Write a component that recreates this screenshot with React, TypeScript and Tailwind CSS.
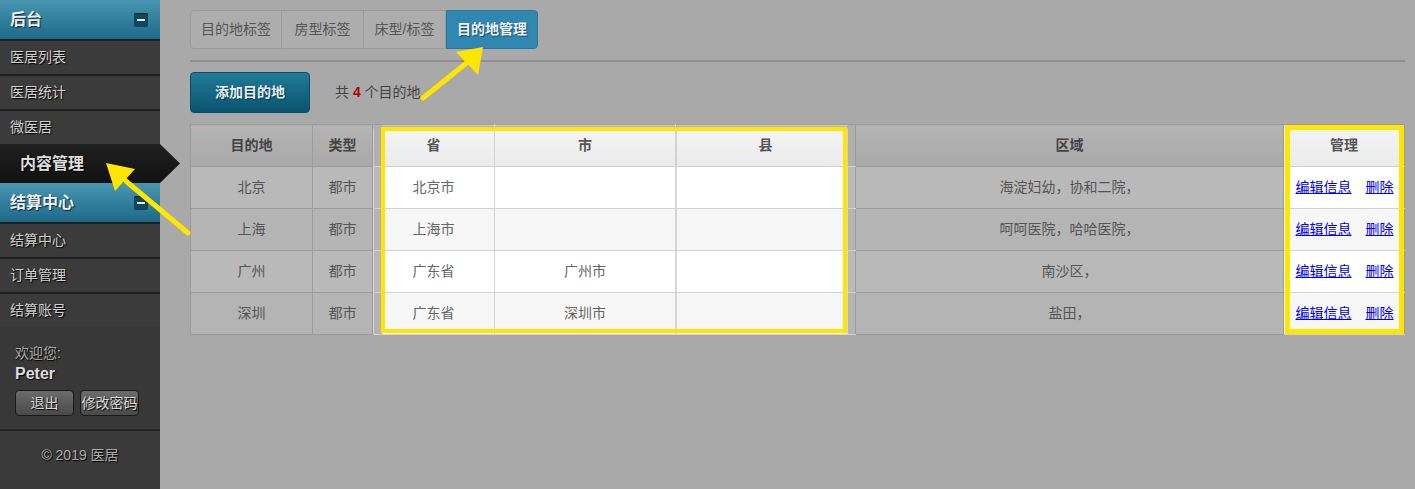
import React from "react";

// 后台 — 目的地管理页（带标注截图）

const FONT = '"Liberation Sans", "Noto Sans CJK SC", sans-serif';

type Row = {
  name: string;
  kind: string;
  province: string;
  city: string;
  county: string;
  area: string;
};

const ROWS: Row[] = [
  { name: "北京", kind: "都市", province: "北京市", city: "", county: "", area: "海淀妇幼，协和二院，" },
  { name: "上海", kind: "都市", province: "上海市", city: "", county: "", area: "呵呵医院，哈哈医院，" },
  { name: "广州", kind: "都市", province: "广东省", city: "广州市", county: "", area: "南沙区，" },
  { name: "深圳", kind: "都市", province: "广东省", city: "深圳市", county: "", area: "盐田，" },
];

function MinusBox() {
  return (
    <span className="flex h-[14px] w-[14px] items-center justify-center rounded-[2px] bg-[#0e4660] shadow-[inset_0_1px_1px_rgba(0,0,0,0.5)]">
      <span className="h-[2px] w-[8px] bg-[#e8e8e8]" />
    </span>
  );
}

function GroupHeader({ title }: { title: string }) {
  return (
    <div className="flex h-[39px] items-center justify-between bg-[linear-gradient(#4896b1,#1c6a87)] pl-[10px] pr-[12px]">
      <span className="text-[16px] font-bold text-[#eeeeee] [text-shadow:1px_1px_1px_#0a2a38]">{title}</span>
      <MinusBox />
    </div>
  );
}

function NavItem({ label }: { label: string }) {
  return (
    <div className="flex h-[35px] items-center border-t-2 border-[#1f1f1f] bg-[#3b3b3b] pl-[10px] text-[14px] text-[#cfcfcf] [text-shadow:1px_1px_1px_#000]">
      {label}
    </div>
  );
}

function Sidebar() {
  return (
    <aside className="relative z-10 flex w-[160px] shrink-0 flex-col bg-[#3a3a3a]">
      <GroupHeader title="后台" />
      <NavItem label="医居列表" />
      <NavItem label="医居统计" />
      <NavItem label="微医居" />
      <div className="flex h-[39px] w-[180px] shrink-0 items-center bg-[linear-gradient(#1f1f1f,#121212)] pl-[20px] text-[16px] font-bold text-[#dddddd] [clip-path:polygon(0_0,160px_0,180px_50%,160px_100%,0_100%)] [text-shadow:1px_1px_1px_#000]">
        内容管理
      </div>
      <GroupHeader title="结算中心" />
      <NavItem label="结算中心" />
      <NavItem label="订单管理" />
      <NavItem label="结算账号" />
      <div className="flex h-[104px] shrink-0 flex-col border-b-2 border-[#222] bg-[#383838] px-[15px] pt-[17px]">
        <span className="text-[14px] leading-[18px] text-[#aaaaaa] [text-shadow:1px_1px_1px_#000]">欢迎您:</span>
        <span className="mt-[2px] text-[16px] font-bold leading-[20px] text-[#dddddd] [text-shadow:1px_1px_1px_#000]">Peter</span>
        <div className="mt-[6px] flex gap-[6px]">
          <button className="h-[26px] w-[59px] rounded-[4px] border border-[#1a1a1a] bg-[linear-gradient(#6c6c6c,#4a4a4a)] text-[14px] text-[#d8d8d8] [text-shadow:1px_1px_1px_#000]">
            退出
          </button>
          <button className="h-[26px] w-[59px] rounded-[4px] border border-[#1a1a1a] bg-[linear-gradient(#6c6c6c,#4a4a4a)] text-[14px] text-[#d8d8d8] [text-shadow:1px_1px_1px_#000]">
            修改密码
          </button>
        </div>
      </div>
      <div className="flex flex-1 justify-center bg-[#3a3a3a] pt-[14px] text-[14px] text-[#aaaaaa] [text-shadow:1px_1px_1px_#000]">
        © 2019 医居
      </div>
    </aside>
  );
}

const TABS = [
  { label: "目的地标签", w: "w-[92px] rounded-l-[4px]" },
  { label: "房型标签", w: "w-[82px] border-l-0" },
  { label: "床型/标签", w: "w-[82px] border-l-0" },
];

function Tabs() {
  return (
    <div className="flex h-[39px]">
      {TABS.map((t) => (
        <div
          key={t.label}
          className={"flex items-center justify-center border border-[#9c9c9c] bg-[#adadad] text-[14px] text-[#555] " + t.w}
        >
          {t.label}
        </div>
      ))}
      <div className="flex w-[92px] items-center justify-center rounded-r-[4px] border border-[#2a78a0] bg-[#2f87b2] text-[14px] font-bold text-[#eef4f8] [text-shadow:1px_1px_1px_#1b4d66]">
        目的地管理
      </div>
    </div>
  );
}

const dimTh =
  "border border-[#9c9c9c] bg-[linear-gradient(#b4b4b4,#a9a9a9)] text-[14px] font-bold text-[#444]";

function Table() {
  return (
    <div className="relative mt-[11px] w-[1214px]">
      <table className="w-[1214px] table-fixed border-collapse text-center">
        <colgroup>
          <col className="w-[122px]" />
          <col className="w-[60px]" />
          <col className="w-[122px]" />
          <col className="w-[181px]" />
          <col className="w-[180px]" />
          <col className="w-[428px]" />
          <col className="w-[121px]" />
        </colgroup>
        <thead>
          <tr className="h-[42px]">
            <th className={dimTh}>目的地</th>
            <th className={dimTh}>类型</th>
            <th className="border border-[#d3d3d3] border-l-[#9c9c9c] border-t-[#9c9c9c] bg-[linear-gradient(to_right,#b0b0b0_9px,transparent_9px),linear-gradient(#b3b3b3_3px,#f4f4f4_3px,#ebebeb)] text-[14px] font-bold text-[#555]">
              省
            </th>
            <th className="border border-[#d3d3d3] border-t-[#9c9c9c] bg-[linear-gradient(#b3b3b3_3px,#f4f4f4_3px,#ebebeb)] text-[14px] font-bold text-[#555]">
              市
            </th>
            <th className="border border-[#d3d3d3] border-r-[#9c9c9c] border-t-[#9c9c9c] bg-[linear-gradient(to_left,#b0b0b0_8px,transparent_8px),linear-gradient(#b3b3b3_3px,#f4f4f4_3px,#ebebeb)] text-[14px] font-bold text-[#555]">
              县
            </th>
            <th className={dimTh}>区域</th>
            <th className="border border-[#d3d3d3] border-r-[#9c9c9c] border-t-[#9c9c9c] bg-[linear-gradient(#f4f4f4,#ebebeb)] text-[14px] font-bold text-[#555]">
              管理
            </th>
          </tr>
        </thead>
        <tbody>
          {ROWS.map((r, i) => {
            const odd = i % 2 === 1;
            const dim = odd ? "bg-[#b4b4b4]" : "bg-[#b9b9b9]";
            const bright = odd ? "bg-[#f7f7f7]" : "bg-white";
            const dimTd = "border border-[#9c9c9c] text-[14px] text-[#555] " + dim;
            const brightTd = "border border-[#d3d3d3] text-[14px] text-[#666] " + bright;
            return (
              <tr key={r.name} className="h-[42px]">
                <td className={dimTd}>{r.name}</td>
                <td className={dimTd}>{r.kind}</td>
                <td
                  className={
                    "border border-[#d3d3d3] border-l-[#9c9c9c] text-[14px] text-[#666] " +
                    (odd
                      ? "bg-[linear-gradient(to_right,#b4b4b4_9px,#f7f7f7_9px)]"
                      : "bg-[linear-gradient(to_right,#b9b9b9_9px,#ffffff_9px)]")
                  }
                >
                  {r.province}
                </td>
                <td className={brightTd}>{r.city}</td>
                <td
                  className={
                    "border border-[#d3d3d3] border-r-[#9c9c9c] text-[14px] text-[#666] " +
                    (odd
                      ? "bg-[linear-gradient(to_left,#b4b4b4_8px,#f7f7f7_8px)]"
                      : "bg-[linear-gradient(to_left,#b9b9b9_8px,#ffffff_8px)]")
                  }
                >
                  {r.county}
                </td>
                <td className={dimTd}>{r.area}</td>
                <td className={"border border-[#d3d3d3] border-r-[#9c9c9c] text-[14px] " + bright}>
                  <span className="flex justify-center gap-[14px] pl-[1px]">
                    <a href="#" className="text-[#0000ee] underline">编辑信息</a>
                    <a href="#" className="text-[#0000ee] underline">删除</a>
                  </span>
                </td>
              </tr>
            );
          })}
        </tbody>
      </table>
      {/* 标注框 */}
      <div className="pointer-events-none absolute left-[191px] top-[3px] h-[206px] w-[466px] border-[4px] border-[#ffe600]" />
      <div className="pointer-events-none absolute left-[1095px] top-[1px] h-[209px] w-[119px] border-[5px] border-[#ffe600]" />
    </div>
  );
}

function Arrows() {
  return (
    <svg
      className="pointer-events-none absolute left-0 top-0 z-20"
      width="1415"
      height="489"
      viewBox="0 0 1415 489"
    >
      <line x1="188" y1="233" x2="121" y2="177" stroke="#ffe600" strokeWidth="5" strokeLinecap="round" />
      <polygon points="106,163 135,169 115,191" fill="#ffe600" />
      <line x1="423" y1="98" x2="469" y2="61" stroke="#ffe600" strokeWidth="5" strokeLinecap="round" />
      <polygon points="483,47 456,52 478,75" fill="#ffe600" />
    </svg>
  );
}

export default function App() {
  return (
    <div className="relative flex h-[489px] w-[1415px] overflow-hidden bg-[#a9a9a9]" style={{ fontFamily: FONT }}>
      <Sidebar />
      <main className="flex flex-1 flex-col pl-[30px] pt-[10px]">
        <Tabs />
        <div className="mt-[11px] h-[2px] w-[1215px] bg-[#8e8e8e]" />
        <div className="mt-[10px] flex items-center">
          <button className="h-[41px] w-[120px] rounded-[4px] border border-[#0b4d66] bg-[linear-gradient(#217a98,#0a546f)] text-[14px] font-bold text-[#e6eef2] [text-shadow:1px_1px_1px_#06384b]">
            添加目的地
          </button>
          <span className="ml-[25px] text-[14px] text-[#444]">
            共 <b className="text-[#b00000]">4</b> 个目的地
          </span>
        </div>
        <Table />
      </main>
      <Arrows />
    </div>
  );
}
